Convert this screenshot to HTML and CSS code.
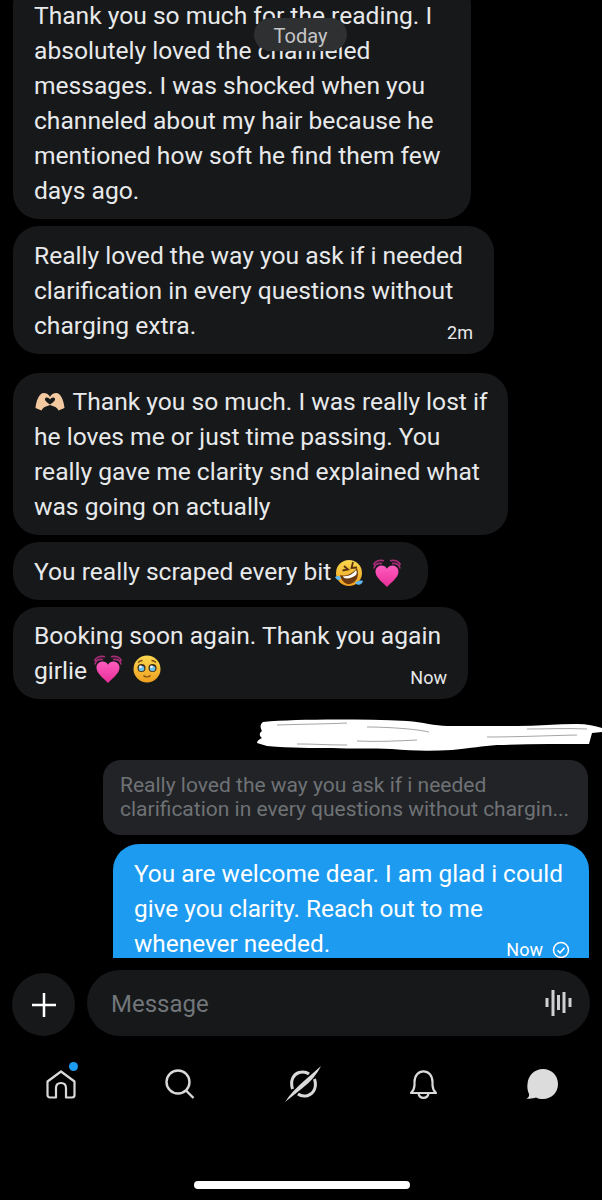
FILE: index.html
```html
<!DOCTYPE html>
<html lang="en">
<head>
    <meta charset="UTF-8">
    <meta name="viewport" content="width=device-width, initial-scale=1.0">
    <title>Messages</title>
    <link rel="stylesheet" href="styles.css">
</head>
<body>
    <svg class="defs" width="0" height="0" aria-hidden="true">
        <defs>
            <linearGradient id="pink" x1="0" y1="0" x2="0" y2="1">
                <stop offset="0" stop-color="#ff5cc0"/>
                <stop offset="1" stop-color="#e82f98"/>
            </linearGradient>
            <linearGradient id="gold" x1="0" y1="0" x2="0" y2="1">
                <stop offset="0" stop-color="#fbd84f"/>
                <stop offset="1" stop-color="#ef9f1f"/>
            </linearGradient>
            <symbol id="growing-heart" viewBox="0 0 28 28">
                <path d="M14 28C8 22 2.500 18 2.500 12.500 2.500 9 5.500 6.500 8.500 6.500c2.300 0 4.300 1.200 5.500 3.200 1.200-2 3.200-3.200 5.500-3.200 3 0 6 2.500 6 6C25.500 18 20 22 14 28Z" fill="url(#pink)"/>
                <path d="M1 9.500C1.500 6 4.500 4 9 4.500M0.500 6C2 2.500 6 .5 11 1.800M27 9.500C26.500 6 23.500 4 19 4.500M27.500 6C26 2.500 22 .5 17 1.800" fill="none" stroke="#a92c78" stroke-width="1.700"/>
            </symbol>
        </defs>
    </svg>

    <div class="chat">
        <div class="today">Today</div>

        <div class="bubble first">Thank you so much for the reading. I absolutely loved the channeled messages. I was shocked when you channeled about my hair because he mentioned how soft he find them few days ago.</div>

        <div class="bubble second">Really loved the way you ask if i needed clarification in every questions without charging extra.<span class="time">2m</span></div>

        <div class="bubble third">
            <svg class="emoji hands" viewBox="0 0 30 19"><path d="M15 5C13.500 1.500 8.500 0 6 2 2.500 5 1 11 0.500 16l6 2.500c1-2 2.500-3.500 4.500-4l4-1.500 4 1.500c2 .5 3.500 2 4.500 4l6-2.500C29 11 27.500 5 24 2c-2.500-2-7.500-.5-9 3Zm0 2.500c1-1.500 3-2.500 4.500-1.500 1.500 1.500 0 3.500-4.500 6.500-4.500-3-6-5-4.500-6.500C12 5 14 6 15 7.500Z" fill="#f5c9a0" fill-rule="evenodd"/></svg>
            Thank you so much. I was really lost if he loves me or just time passing. You really gave me clarity snd explained what was going on actually
        </div>

        <div class="bubble fourth">You really scraped every bit<svg class="emoji laugh" viewBox="0 0 28 28"><circle cx="14" cy="14" r="13" fill="url(#gold)"/><path d="M5 16c6 2 12-1 17-7 3 8-1 15-7 16-5 1-9-4-10-9Z" fill="#6d3a10"/><path d="M8 17c5 1 10-2 13-6 1 2 1 3 0 5-4 3-8 4-12 3Z" fill="#fff"/><path d="M9 7l4 3.500-5.500 1M18 3l-1.500 6 5.500-.5" fill="none" stroke="#5a3410" stroke-width="1.800"/><path d="M0 18c3-2 5-1 6 1-1 3-4 3-6-1ZM20 24c2-2 5-3 8-2-1 4-5 5-8 2Z" fill="#5fb8ee"/></svg><svg class="emoji heart"><use href="#growing-heart"/></svg></div>

        <div class="bubble fifth">Booking soon again. Thank you again girlie<svg class="emoji heart after-word"><use href="#growing-heart"/></svg><svg class="emoji plead" viewBox="0 0 28 28"><circle cx="14" cy="14" r="13.500" fill="url(#gold)"/><circle cx="8.500" cy="13" r="4" fill="#3d2a16"/><circle cx="19.500" cy="13" r="4" fill="#3d2a16"/><circle cx="8.500" cy="13.500" r="2.800" fill="#6cc0ee"/><circle cx="19.500" cy="13.500" r="2.800" fill="#6cc0ee"/><circle cx="7.500" cy="11.800" r="1.300" fill="#fff"/><circle cx="18.500" cy="11.800" r="1.300" fill="#fff"/><path d="M5 7.500c1.500-1.500 3-2 4.500-2M23 7.500c-1.500-1.500-3-2-4.500-2M10.500 20.500c2 1.800 5 1.800 7 0" fill="none" stroke="#7a4a14" stroke-width="1.300"/></svg><span class="time">Now</span></div>

        <svg class="scribble" viewBox="0 0 345 32" preserveAspectRatio="none">
            <path d="M6 3C40 0 100 0 150 2 166 3 178 7 190 7L260 7C280 7 300 5 320 5 330 5 338 7 345 9V13L335 14 332 25C300 25 270 25 240 26 225 27 215 29 195 31 175 32 155 32 135 30 115 29 95 30 75 29 55 29 35 29 10 27L0 24C0 22 2 20 5 19 2 17 2 14 5 12 3 9 3 5 6 3Z" fill="#fff"/>
            <path d="M20 6C50 5 70 5 90 4M110 8c20 0 50 2 62 5M100 22c20 1 40 0 60-1M40 25c20 0 30 1 50 1M270 10c20 0 40-1 60 0M230 18c25 0 50-1 90-2" fill="none" stroke="#000" stroke-opacity=".45" stroke-width=".8"/>
        </svg>

        <div class="quote">
            <div>Really loved the way you ask if i needed</div>
            <div class="quote-cut">clarification in every questions without chargin...</div>
        </div>

        <div class="bubble mine">You are welcome dear. I am glad i could give you clarity. Reach out to me whenever needed.<span class="time">Now<svg class="check" viewBox="0 0 18 18"><circle cx="9" cy="9" r="7.500" fill="none" stroke="#fff" stroke-width="1.500"/><path d="M5.500 9.300l2.500 2.500 4.500-5" fill="none" stroke="#fff" stroke-width="1.500"/></svg></span></div>
    </div>

    <div class="composer">
        <div class="plus">
            <svg viewBox="0 0 24 24" width="24" height="24"><path d="M12 0v24M0 12h24" stroke="#fff" stroke-width="2.500"/></svg>
        </div>
        <div class="input">
            <span class="placeholder">Message</span>
            <svg viewBox="0 0 28 28" width="28" height="28"><path d="M3 9v9M9 1v26M14.500 6v15M20 3v21M26 9v9" stroke="#cfd0d1" stroke-width="3"/></svg>
        </div>
    </div>

    <nav class="nav">
        <div class="nav-item home">
            <svg viewBox="0 0 30 29" width="30" height="29"><path d="M1.500 25V11.500L15 1.500l13.500 10V25c0 1.500-1 2.500-2.500 2.500h-6V18c0-3-2-5-5-5s-5 2-5 5v9.500H4C2.500 27.500 1.500 26.500 1.500 25Z" fill="none" stroke="#d9d9d9" stroke-width="2.200" stroke-linejoin="round"/></svg>
            <span class="dot"></span>
        </div>
        <div class="nav-item">
            <svg viewBox="0 0 30 30" width="30" height="30"><circle cx="13" cy="13" r="11.500" fill="none" stroke="#d9d9d9" stroke-width="2.400"/><path d="M21 21.500l7.500 7.500" stroke="#d9d9d9" stroke-width="2.400"/></svg>
        </div>
        <div class="nav-item">
            <svg viewBox="0 0 36 36" width="36" height="36"><path d="M7.500 23C5 15 8 8.500 14 6.500c3.500-1 7.500-.5 10 1.500M29.500 13c2.500 8-.5 14.500-6.500 16.500-3.500 1-7.500.5-10-1.500" fill="none" stroke="#d9d9d9" stroke-width="3"/><path d="M36 0C32 8 26 15.500 17 22.500L0 36C5 28 12 21 19.500 14.500Z" fill="#d9d9d9"/></svg>
        </div>
        <div class="nav-item">
            <svg viewBox="0 0 27 29" width="27" height="29"><path d="M1 23c2-2 3.500-5 3.500-8v-3C4.500 5.500 8.500 1.300 13.500 1.300s9 4.200 9 10.700v3c0 3 1.500 6 3.500 8Z" fill="none" stroke="#d9d9d9" stroke-width="2.200" stroke-linejoin="round"/><path d="M8.500 23.500c.5 2.800 2.500 4.300 5 4.300s4.500-1.500 5-4.300" fill="none" stroke="#d9d9d9" stroke-width="2.200"/></svg>
        </div>
        <div class="nav-item">
            <svg viewBox="0 0 32 30" width="32" height="30"><path d="M17 0c8.500 0 15 6.500 15 15s-6.500 15-15 15c-2.500 0-5-.5-7-1.500-2.500 1-6 1.500-9.500 1 2-1 3-2.500 2.500-4.500C1.500 22 1 18 1.500 15 2 6.500 8.500 0 17 0Z" fill="#dcdcdc"/></svg>
        </div>
    </nav>

    <div class="home-bar"></div>
</body>
</html>
```

FILE: styles.css
```css
* {
    box-sizing: border-box;
}
body {
    margin: 0;
    width: 602px;
    height: 1200px;
    overflow: hidden;
    background: #000;
    color: #e7e9ea;
    font-family: Roboto, "Liberation Sans", sans-serif;
}
.defs {
    display: block;
}
.chat {
    position: relative;
    height: 958px;
    overflow: hidden;
    display: flex;
    flex-direction: column;
    align-items: flex-start;
    padding: 0 13px;
}
.today {
    position: absolute;
    z-index: 1;
    top: 18px;
    left: 254px;
    width: 93px;
    height: 33px;
    border-radius: 17px;
    background: #2f3031;
    color: #c5c6c7;
    font-size: 20px;
    line-height: 37px;
    text-align: center;
}
.bubble {
    position: relative;
    flex: none;
    padding: 12px 8px 11px 21px;
    border-radius: 26px;
    background: #17181a;
    font-size: 24.600px;
    line-height: 35px;
}
.first {
    width: 458px;
    height: 240px;
    margin-top: -21px;
    padding-top: 19px;
}
.second {
    width: 481px;
    height: 128px;
    margin-top: 7px;
}
.third {
    width: 495px;
    height: 162px;
    margin-top: 19px;
    padding-top: 11px;
}
.fourth {
    width: 415px;
    height: 58px;
    margin-top: 7px;
}
.fifth {
    width: 455px;
    height: 92px;
    margin-top: 7px;
    padding-top: 11px;
}
.time {
    position: absolute;
    right: 21px;
    bottom: 11px;
    display: flex;
    align-items: center;
    gap: 9px;
    font-size: 18px;
    line-height: 20px;
}
.emoji {
    display: inline-block;
    vertical-align: -5px;
}
.hands {
    width: 30px;
    height: 19px;
    margin: 0 2px 0 1px;
    vertical-align: -1px;
}
.laugh {
    width: 28px;
    height: 28px;
    margin-left: 4px;
    vertical-align: -7px;
}
.heart {
    width: 28px;
    height: 28px;
    margin-left: 10px;
    vertical-align: -7px;
}
.after-word {
    margin-left: 7px;
    vertical-align: -4px;
}
.plead {
    width: 28px;
    height: 28px;
    margin-left: 11px;
    vertical-align: -4px;
}
.scribble {
    align-self: flex-end;
    flex: none;
    width: 345px;
    height: 32px;
    margin: 20px -13px 0 0;
}
.quote {
    align-self: flex-end;
    flex: none;
    width: 485px;
    height: 75px;
    margin: 9px 1px 0 0;
    padding: 13px 17px;
    border-radius: 18px;
    background: #212327;
    color: #6f7275;
    font-size: 21px;
    line-height: 24px;
}
.quote-cut {
    white-space: nowrap;
}
.mine {
    align-self: flex-end;
    flex: none;
    width: 476px;
    height: 140px;
    margin: 9px 0 0 0;
    padding-top: 12px;
    background: #1d9bf0;
    color: #fff;
    font-size: 24.400px;
}
.mine .time {
    right: 19px;
    bottom: 24px;
}
.check {
    width: 18px;
    height: 18px;
}
.composer {
    display: flex;
    align-items: flex-end;
    gap: 12px;
    margin-top: 12px;
    padding: 0 12px;
}
.plus {
    display: flex;
    align-items: center;
    justify-content: center;
    flex: none;
    width: 63px;
    height: 63px;
    border-radius: 50%;
    background: #17181a;
}
.input {
    display: flex;
    align-items: center;
    justify-content: space-between;
    flex: 1;
    height: 66px;
    padding: 0 18px 0 24px;
    border-radius: 33px;
    background: #17181a;
}
.placeholder {
    padding-top: 2px;
    color: #71767b;
    font-size: 24px;
}
.nav {
    display: flex;
    justify-content: space-between;
    align-items: center;
    margin-top: 30px;
    padding: 0 44px 0 46px;
}
.nav-item {
    position: relative;
    display: flex;
}
.dot {
    position: absolute;
    top: -8px;
    right: -2px;
    width: 9px;
    height: 9px;
    border-radius: 50%;
    background: #1d9bf0;
}
.home-bar {
    position: absolute;
    left: 194px;
    top: 1181px;
    width: 216px;
    height: 8px;
    border-radius: 4px;
    background: #fff;
}
```
